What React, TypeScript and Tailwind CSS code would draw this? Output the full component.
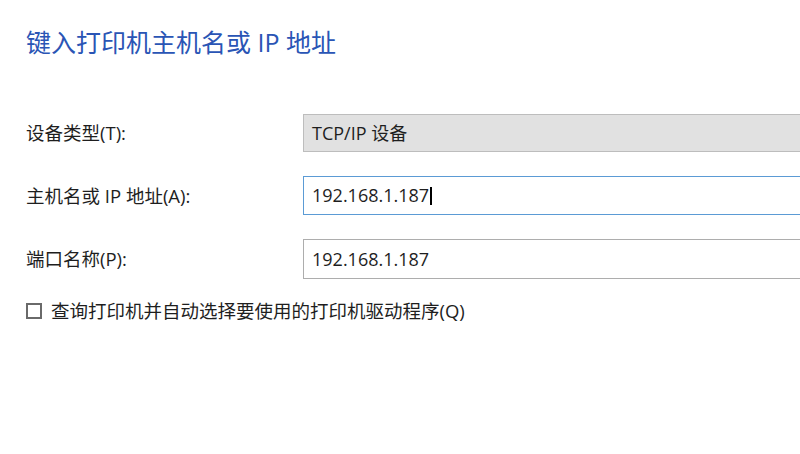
import React from "react";

const font = { fontFamily: '"Open Sans","Noto Sans CJK SC",sans-serif' };

export default function App() {
  return (
    <div
      className="w-[800px] h-[454px] bg-white overflow-hidden pl-[26px] pt-[26px] text-[#1e1e1e]"
      style={font}
    >
      <div className="text-[25px] leading-[33px] text-[#2a55b5]">键入打印机主机名或 IP 地址</div>

      <div className="mt-[55px] flex items-center h-[38px]">
        <div className="w-[277px] shrink-0 text-[18.5px]">设备类型(T):</div>
        <div className="w-[600px] shrink-0 h-full bg-[#e1e1e1] border border-[#bdbdbd] flex items-center pl-[8px] text-[18px]">
          TCP/IP 设备
        </div>
      </div>

      <div className="mt-[24px] flex items-center h-[39px]">
        <div className="w-[277px] shrink-0 text-[18.5px]">主机名或 IP 地址(A):</div>
        <div className="w-[600px] shrink-0 h-full bg-white border border-[#5b9bd5] flex items-center pl-[8px] text-[18px]">
          <span>192.168.1.187</span>
          <span className="inline-block w-[1.5px] h-[18px] bg-black ml-[1px]"></span>
        </div>
      </div>

      <div className="mt-[24px] flex items-center h-[40px]">
        <div className="w-[277px] shrink-0 text-[18.5px]">端口名称(P):</div>
        <div className="w-[600px] shrink-0 h-full bg-white border border-[#adadad] flex items-center pl-[8px] text-[18px]">
          192.168.1.187
        </div>
      </div>

      <div className="mt-[22px] flex items-center h-[20px] gap-[9px]">
        <div className="w-[16px] h-[16px] border-2 border-[#6a6a6a] bg-white shrink-0"></div>
        <div className="text-[18.5px] leading-[20px]">查询打印机并自动选择要使用的打印机驱动程序(Q)</div>
      </div>
    </div>
  );
}
